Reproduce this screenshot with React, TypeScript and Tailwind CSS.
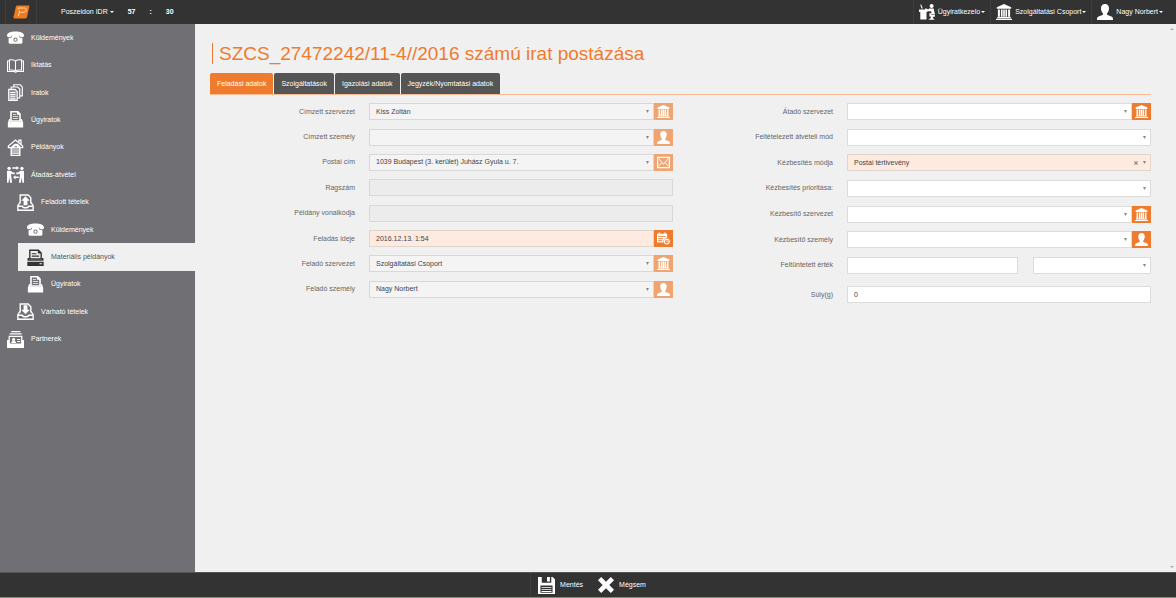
import { useId, useState, type ReactNode } from "react";

type IconName =
  | "phone" | "book" | "pages" | "tray" | "house" | "handover" | "outbox" | "printer"
  | "inbox" | "cards" | "desk" | "bank" | "user" | "mail" | "calendar" | "save" | "close";

const drawings: Record<IconName, ReactNode> = {
  phone: (
    <>
      <path d="M0 6C0 3.600 3.500 2.400 8 2.400S16 3.600 16 6c0 1.300-1 1.700-2.200 1.700S11.600 7.200 11.600 6.200H4.400C4.400 7.200 3.400 7.700 2.200 7.700S0 7.300 0 6Z" />
      <path fillRule="evenodd" d="M5.200 5.500h5.600l1 2.600 2.700.5v4.200c0 .7-.5 1.100-1.200 1.100H2.700c-.7 0-1.200-.4-1.200-1.100V8.600l2.700-.5ZM8 8a2 2 0 1 0 0 4 2 2 0 0 0 0-4Zm0 .9a1.100 1.100 0 1 1 0 2.200 1.100 1.100 0 0 1 0-2.200Z" />
    </>
  ),
  book: (
    <g fill="none" stroke="currentColor" strokeWidth="1">
      <path d="M8 3.800C6.800 2.700 4.500 2.500 2.300 2.700v9.600c2.200-.2 4.500 0 5.700 1 1.200-1 3.500-1.200 5.700-1V2.700C11.500 2.500 9.200 2.700 8 3.800Zm0 0v9.500" />
      <path d="M2.300 3.700H.5v10h6.300c.6.700 1.800.7 2.400 0h6.300v-10h-1.800" />
    </g>
  ),
  pages: (
    <g fill="none" stroke="currentColor" strokeWidth="1.100">
      <path fill="currentColor" fillOpacity=".25" d="M1.600 5h5.900L9.600 7v8.400h-8Z" />
      <path d="M4 5V2.800h6l2 2v8.400H9.800M6.400 2.700V.7h6l2 2v8.400h-2.300M3 8h5M3 10h5M3 12h5M3 14h5" />
    </g>
  ),
  tray: (
    <>
      <path fillRule="evenodd" d="M4 0h6.500L13 2.500V10H3V0Zm.5 1.300v7.500h7V3.500H9.300V1.300Z" />
      <path d="M5.500 3h3v.8h-3Zm0 1.900h5v.8h-5Zm0 1.900h5v.8h-5ZM2 7.500h1V10h10V7.500h1l1.200 3.500v4.500H.8V11Z" />
    </>
  ),
  house: (
    <>
      <path fill="none" stroke="currentColor" strokeWidth="1.200" d="M4 8.200H1.300V6.600L8 1l6.700 5.600v1.600H12M11.200 3.200V1h2v4" />
      <path fillRule="evenodd" d="M7 4.500h3l2.700 2.700V16H3.300V8Zm.2 2.400v.9h2.300v-.9ZM4.600 9v.9h6.800V9Zm0 1.800v.9h6.800v-.9Zm0 1.800v.9h6.800v-.9Zm0 1.700v.8h6.800v-.8Z" />
    </>
  ),
  handover: (
    <>
      <circle cx="2" cy="2.200" r="1.600" />
      <circle cx="14" cy="2.200" r="1.600" />
      <path d="M.3 4.500h3l2.400 1.700h1.600v1.500H5L3.900 7v2l.9 6.700H3L2 10.500l-.5 5.200H0V5Zm15.400 0h-3l-2.400 1.700H8.700v1.500H11l1.100-.7v2l-.9 6.700H13l1-5.200.5 5.200H16V5ZM5 1.200h4V0l2.300 1.900L9 3.800V2.600H5Zm6 8.600H8V8.600l-2.400 2L8 12.600v-1.300h3Z" />
    </>
  ),
  outbox: (
    <>
      <path fill="none" stroke="currentColor" strokeWidth="1.300" d="M3 9V1h7.500L13 3.500V9M2.700 8 .8 11v4.300h14.400V11L13.300 8M.8 11.500H5c.5 2 5.500 2 6 0h4.200" />
      <path d="m8 2.200 4 4.200H9.800v4.200H6.200V6.400H4Z" />
    </>
  ),
  inbox: (
    <>
      <path fill="none" stroke="currentColor" strokeWidth="1.300" d="M3 9V1h7.500L13 3.500V9M2.700 8 .8 11v4.300h14.400V11L13.300 8M.8 11.500H5c.5 2 5.500 2 6 0h4.200" />
      <path d="M8 10.600 4 6.400h2.200V2.200h3.600v4.200H12Z" />
    </>
  ),
  printer: (
    <>
      <path fillRule="evenodd" d="M2 .5h9L14 3.500V10H2Zm1.300 1.300v7h9.400V4.300h-2.500V1.800Z" />
      <path d="M4.500 4h4.300v1H4.500Zm0 2.200h7v1h-7ZM.5 8.500H2V10h12V8.500h1.500V11H.5Z" />
      <path fillRule="evenodd" d="M.3 12h15.400v4H.3Zm11.500 1.300v1.100h2.400v-1.100Z" />
    </>
  ),
  cards: (
    <>
      <path d="M4 0h8.500v1.200H4ZM2.500 2.200h11.300v1.200H2.500Z" />
      <path fillRule="evenodd" d="M1.500 4.500h13v4H16V16H0V8.500h1.500Zm1.200 1.200v6h10.600v-6Z" />
      <path d="M4 11.200c0-1.300.7-1.700 1.400-1.900a1.500 1.500 0 1 1 1.700 0c.7.2 1.400.6 1.400 1.900Zm5.500-3.700h3v.9h-3Zm0 2h3v.9h-3Z" />
    </>
  ),
  desk: (
    <>
      <circle cx="12.600" cy="2" r="2" />
      <path d="M0 5.500h8.500V8H7.500v7.500H1.300V8H0ZM1.200.8l1-.3 1.600 4H2.600ZM10 4.400h4.600l1.400 6.100H12v2h-1.600V9.300h2.200L12 7.200H9l-3-2 .6-1L9.400 5.600Zm5.900 6.500v1.800h-2V14l1.800 1.800H9.300L11.800 14v-3.100Z" />
    </>
  ),
  bank: (
    <path d="M8 0 .8 3.200v1.600h14.400V3.200ZM1.900 5.500h2v7.300h-2Zm3 0h1.700v7.300H4.900Zm2.300 0h1.600v7.300H7.200Zm2.200 0h1.700v7.300H9.400Zm2.700 0h2v7.300h-2ZM1.200 13h13.600v1.300H1.200ZM0 14.700h16V16H0Z" />
  ),
  user: (
    <path d="M8 0c2.600 0 4 1.700 4 4.200 0 2.200-.7 3.800-1.700 4.900-.5.600-.4 1.700.3 2l3.800 1.500c1.200.5 1.600 1.300 1.600 3.400H0c0-2.100.4-2.900 1.600-3.400l3.800-1.500c.7-.3.800-1.400.3-2C4.700 8 4 6.400 4 4.200 4 1.700 5.400 0 8 0Z" />
  ),
  mail: (
    <g fill="none" stroke="currentColor" strokeWidth="1.500">
      <path d="M.8 1.800h14.400v12.400H.8Z" />
      <path d="M2.500 3.500 8 10.200l5.500-6.700M2.200 12.500l3.200-3.800M13.800 12.500l-3.200-3.800" strokeWidth="1.200" />
    </g>
  ),
  calendar: (
    <>
      <path fillRule="evenodd" d="M0 2h2V.5h1.500V2H9V.5h1.500V2h2v5a4.500 4.500 0 0 0-4.300 6H0Zm1.500 3.300v1h9.500v-1Zm0 2.500v1h6v-1Zm0 2.500v1h5v-1Z" />
      <circle cx="12.200" cy="11.800" r="3" fill="none" stroke="currentColor" strokeWidth="1.300" />
      <path d="M11.800 9.800h.9v2h1.500v.9h-2.400Z" />
    </>
  ),
  save: (
    <path fillRule="evenodd" d="M0 0h3.500v5.500h9V0h1.300L16 2.200V16H0Zm2.300 8v6.800h11.400V8Zm1 1.300h9.400v.9H3.300Zm0 1.900h9.400v.9H3.300Zm0 1.900h9.400v.9H3.300ZM8.500 0h2.700v4.300H8.500Z" />
  ),
  close: (
    <path d="M3.200 0 8 4.700 12.800 0 16 3.200 11.300 8l4.700 4.800-3.200 3.200L8 11.300 3.200 16 0 12.800 4.700 8 0 3.200Z" />
  ),
};

function Icon({ name, className }: { name: IconName; className: string }) {
  return (
    <svg viewBox="0 0 16 16" fill="currentColor" aria-hidden="true" className={"shrink-0 " + className}>
      {drawings[name]}
    </svg>
  );
}

function Caret({ tall = false }: { tall?: boolean }) {
  return (
    <svg
      viewBox="0 0 4 4"
      preserveAspectRatio="none"
      fill="currentColor"
      aria-hidden="true"
      className={tall ? "h-[3px] w-[3px] shrink-0" : "h-[2px] w-[4px] shrink-0"}
    >
      <path d="M0 0h4L2 4Z" />
    </svg>
  );
}

const menu: { icon: IconName; text: string; level: number; active?: boolean }[] = [
  { icon: "phone", text: "Küldemények", level: 0 },
  { icon: "book", text: "Iktatás", level: 0 },
  { icon: "pages", text: "Iratok", level: 0 },
  { icon: "tray", text: "Ügyiratok", level: 0 },
  { icon: "house", text: "Példányok", level: 0 },
  { icon: "handover", text: "Átadás-átvétel", level: 0 },
  { icon: "outbox", text: "Feladott tételek", level: 1 },
  { icon: "phone", text: "Küldemények", level: 2 },
  { icon: "printer", text: "Materiális példányok", level: 2, active: true },
  { icon: "tray", text: "Ügyiratok", level: 2 },
  { icon: "inbox", text: "Várható tételek", level: 1 },
  { icon: "cards", text: "Partnerek", level: 0 },
];

const indents = ["pl-[7px]", "pl-[17px]", "pl-[27px]"];

const account: { icon: IconName; text: string }[] = [
  { icon: "desk", text: "Ügyiratkezelo" },
  { icon: "bank", text: "Szolgáltatási Csoport" },
  { icon: "user", text: "Nagy Norbert" },
];

const tabs = ["Feladási adatok", "Szolgáltatások", "Igazolási adatok", "Jegyzék/Nyomtatási adatok"];

type Tone = "white" | "soft" | "off" | "peach";

const tones: Record<Tone, string> = {
  white: "bg-white border-[#dcdcdc]",
  soft: "bg-[#f4f4f4] border-[#d8d8d8]",
  off: "bg-[#ececec] border-[#d8d8d8]",
  peach: "bg-[#ffeadf] border-[#e0d6d0]",
};

interface FieldProps {
  label: string;
  value?: string;
  kind?: "select" | "input";
  tone?: Tone;
  icon?: IconName;
  faded?: boolean;
  clearable?: boolean;
}

function Picker({ id, value = "", tone, clearable, label }: { id?: string; value?: string; tone: Tone; clearable?: boolean; label?: string }) {
  return (
    <div className="relative flex min-w-0 flex-1 text-[#888]">
      <select
        id={id}
        aria-label={label}
        defaultValue={value}
        className={"h-[17px] w-full appearance-none border pr-5 pl-[6px] text-[7px] text-[#444] " + tones[tone]}
      >
        <option value={value}>{value}</option>
      </select>
      {clearable && (
        <button type="button" aria-label="Törlés" className="absolute inset-y-0 right-[13px] flex items-center">
          <Icon name="close" className="size-[4px]" />
        </button>
      )}
      <span className="pointer-events-none absolute inset-y-0 right-[5px] flex items-center">
        <Caret tall />
      </span>
    </div>
  );
}

function Field({ label, value = "", kind = "select", tone = "white", icon, faded, clearable }: FieldProps) {
  const id = useId();
  return (
    <div className="flex items-center gap-[14px]">
      <label htmlFor={id} className="w-[145px] shrink-0 text-right text-[7px] text-[#666]">
        {label}
      </label>
      <div className="flex min-w-0 flex-1">
        {kind === "select" ? (
          <Picker id={id} value={value} tone={tone} clearable={clearable} />
        ) : (
          <input
            id={id}
            defaultValue={value}
            disabled={tone === "off"}
            className={"h-[17px] w-full min-w-0 flex-1 border px-[6px] text-[7px] text-[#444] " + tones[tone]}
          />
        )}
        {icon && (
          <button
            type="button"
            aria-label={label + " kiválasztása"}
            className={"flex h-[17px] w-[19px] shrink-0 items-center justify-center text-white " + (faded ? "bg-[#f0a472]" : "bg-[#ee7b2e]")}
          >
            <Icon name={icon} className="size-[13px]" />
          </button>
        )}
      </div>
    </div>
  );
}

function ValueField() {
  const id = useId();
  return (
    <div className="flex items-center gap-[14px]">
      <label htmlFor={id} className="w-[145px] shrink-0 text-right text-[7px] text-[#666]">
        Feltüntetett érték
      </label>
      <div className="grid min-w-0 flex-1 grid-cols-[171fr_118fr] gap-[15px]">
        <input id={id} className={"h-[17px] min-w-0 border px-[6px] text-[7px] text-[#444] " + tones.white} />
        <Picker tone="white" label="Pénznem" />
      </div>
    </div>
  );
}

export default function App() {
  const [tab, setTab] = useState(0);

  return (
    <div className="flex min-h-screen flex-col bg-[#f0f0f0] font-['Liberation_Sans',Arial,sans-serif] text-[7px] leading-[10px]">
      <header className="flex h-6 items-stretch bg-[#333] text-white">
        <a href="#" aria-label="Poszeidon" className="ml-[5px] flex w-8 items-center justify-center border-x border-[#3d3d3d]">
          <svg viewBox="0 0 17 14" className="h-[14px] w-[17px]" aria-hidden="true">
            <path d="M4.500.5h10.800c.8 0 1.200.5 1 1.300L14 12c-.2.900-.8 1.400-1.600 1.400H1.500c-.8 0-1.200-.5-1-1.300L2.800 2C3 1 3.600.5 4.500.5Z" fill="#ee7b1e" />
            <path d="M5 4.300 5.400 3h6c1.600 0 2.200.9 1.800 2.200-.4 1.500-1.400 2.200-3 2.200H7.500m-2.200 3.800 1.500-5.700" fill="none" stroke="#ffd9b8" strokeWidth="1" />
          </svg>
        </a>
        <button type="button" className="ml-6 flex items-center gap-[2px]">
          Poszeidon IDR <Caret />
        </button>
        <div className="ml-[14px] flex items-center gap-[14px] font-bold">
          <span>57</span>
          <span>:</span>
          <span>30</span>
        </div>
        <nav className="ml-auto flex">
          {account.map((a) => (
            <button key={a.text} type="button" className="flex items-center border-l border-[#3d3d3d] pr-[5px] pl-[5px] last:pr-[13px]">
              <Icon name={a.icon} className="size-4" />
              <span className="mr-px ml-[3px]">{a.text}</span>
              <Caret />
            </button>
          ))}
        </nav>
      </header>

      <div className="flex flex-1">
        <aside className="w-[195px] shrink-0 bg-[#706f73]">
          <nav className="grid h-[329px] grid-rows-12">
            {menu.map((m, i) => (
              <a
                key={i}
                href="#"
                className={
                  "flex items-center gap-[7px] " +
                  (m.active ? "ml-[18px] bg-[#f0f0f0] pl-[9px] text-[#555]" : indents[m.level] + " text-white")
                }
              >
                <Icon name={m.icon} className={m.active ? "size-[17px] text-[#333]" : "size-[17px]"} />
                {m.text}
              </a>
            ))}
          </nav>
        </aside>

        <main className="min-w-0 flex-1 pr-[17px] pl-[15px]">
          <h1 className="mt-[19px] ml-[2px] border-l border-[#ee7b2e] pl-[6px] text-[19px] leading-[21px] text-[#ee7b2e]">
            SZCS_27472242/11-4//2016 számú irat postázása
          </h1>
          <div role="tablist" className="mt-[9px] flex gap-px border-b border-[#f6bb92]">
            {tabs.map((t, i) => (
              <button
                key={t}
                type="button"
                role="tab"
                aria-selected={tab === i}
                onClick={() => setTab(i)}
                className={"h-[21px] rounded-t-[2px] px-[7px] text-white " + (tab === i ? "bg-[#ee7b2e]" : "bg-[#555]")}
              >
                {t}
              </button>
            ))}
          </div>

          <form className="mt-1 grid grid-cols-2 items-start gap-[15px]">
            <div className="grid h-[203px] grid-rows-8">
              <Field label="Címzett szervezet" value="Kiss Zoltán" tone="soft" icon="bank" faded />
              <Field label="Címzett személy" tone="soft" icon="user" faded />
              <Field label="Postai cím" value="1039 Budapest (3. kerület) Juhász Gyula u. 7." tone="soft" icon="mail" faded />
              <Field label="Ragszám" kind="input" tone="off" />
              <Field label="Példány vonalkódja" kind="input" tone="off" />
              <Field label="Feladás ideje" value="2016.12.13. 1:54" kind="input" tone="peach" icon="calendar" />
              <Field label="Feladó szervezet" value="Szolgáltatási Csoport" tone="soft" icon="bank" faded />
              <Field label="Feladó személy" value="Nagy Norbert" tone="soft" icon="user" faded />
            </div>
            <div>
              <div className="grid h-[179px] grid-rows-7">
                <Field label="Átadó szervezet" icon="bank" />
                <Field label="Feltételezett átvételi mód" />
                <Field label="Kézbesítés módja" value="Postai tértivevény" tone="peach" clearable />
                <Field label="Kézbesítés prioritása:" />
                <Field label="Kézbesítő szervezet" icon="bank" />
                <Field label="Kézbesítő személy" icon="user" />
                <ValueField />
              </div>
              <div className="mt-2">
                <Field label="Súly(g)" value="0" kind="input" />
              </div>
            </div>
          </form>
        </main>

        <div aria-hidden="true" className="flex w-2 flex-col items-center justify-between py-1 text-[#aaa]">
          <span className="rotate-180"><Caret /></span>
          <Caret />
        </div>
      </div>

      <footer className="flex h-[26px] items-center justify-center border-t border-b border-t-[#555] border-b-[#8a8880] bg-[#333] text-white">
        <div className="flex h-full items-center gap-[15px] border-l border-[#3d3d3d] pl-[7px]">
          <button type="button" className="flex items-center gap-[5px]">
            <Icon name="save" className="size-[17px]" />
            Mentés
          </button>
          <button type="button" className="flex items-center gap-[5px]">
            <Icon name="close" className="size-[16px]" />
            Mégsem
          </button>
        </div>
      </footer>
    </div>
  );
}
